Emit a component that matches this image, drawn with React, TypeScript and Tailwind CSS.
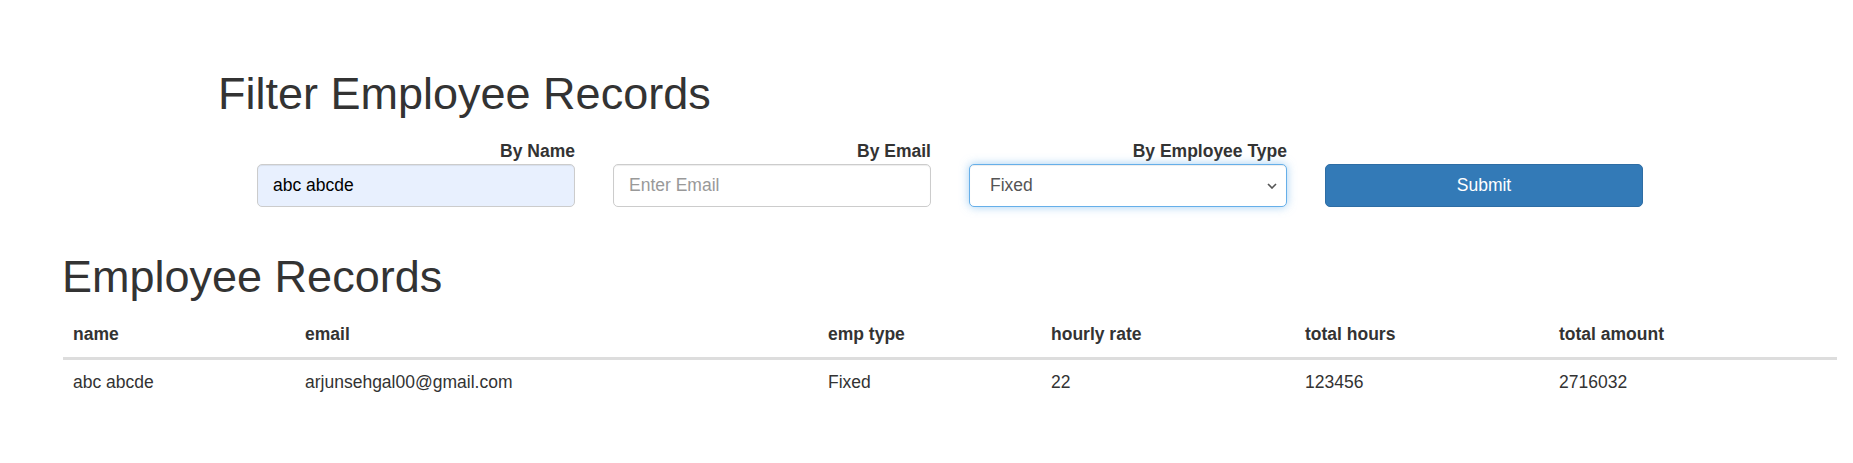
import { useState } from "react";

type Employee = {
  name: string;
  email: string;
  empType: string;
  hourlyRate: number;
  totalHours: number;
  totalAmount: number;
};

const columns: { key: keyof Employee; header: string; width: string }[] = [
  { key: "name", header: "name", width: "w-[232px]" },
  { key: "email", header: "email", width: "w-[523px]" },
  { key: "empType", header: "emp type", width: "w-[223px]" },
  { key: "hourlyRate", header: "hourly rate", width: "w-[254px]" },
  { key: "totalHours", header: "total hours", width: "w-[254px]" },
  { key: "totalAmount", header: "total amount", width: "w-[288px]" },
];

const records: Employee[] = [
  {
    name: "abc abcde",
    email: "arjunsehgal00@gmail.com",
    empType: "Fixed",
    hourlyRate: 22,
    totalHours: 123456,
    totalAmount: 2716032,
  },
];

const inputBase =
  "h-[43px] w-full rounded-[5px] border border-[#ccc] px-[15px] text-[17.5px] outline-none shadow-[inset_0_1px_1px_rgba(0,0,0,0.075)]";

const App = () => {
  const [name, setName] = useState("abc abcde");
  const [email, setEmail] = useState("");
  const [empType, setEmpType] = useState("Fixed");

  return (
    <div className="min-h-[463px] bg-white font-['Liberation_Sans',Arial,sans-serif] text-[17.5px] text-[#333]">
      {/* Filter */}
      <div className="pt-[69px] pl-[218px]">
        <h1 className="text-[45px] leading-[49.5px] font-normal">
          Filter Employee Records
        </h1>
      </div>
      <form
        className="mt-[20px] flex gap-[38px] pl-[257px]"
        onSubmit={(e) => e.preventDefault()}
      >
        <div className="flex w-[318px] flex-col">
          <label className="text-right font-bold leading-[25px]">By Name</label>
          <input
            className={`${inputBase} bg-[#e8f0fe] text-black`}
            value={name}
            onChange={(e) => setName(e.target.value)}
          />
        </div>
        <div className="flex w-[318px] flex-col">
          <label className="text-right font-bold leading-[25px]">By Email</label>
          <input
            className={`${inputBase} bg-white text-[#555] placeholder:text-[#999]`}
            placeholder="Enter Email"
            value={email}
            onChange={(e) => setEmail(e.target.value)}
          />
        </div>
        <div className="flex w-[318px] flex-col">
          <label className="text-right font-bold leading-[25px]">
            By Employee Type
          </label>
          <div className="relative">
            <select
              className="h-[43px] w-full appearance-none rounded-[5px] border border-[#66afe9] bg-white pl-[20px] text-[17.5px] text-[#555] outline-none shadow-[inset_0_1px_1px_rgba(0,0,0,0.075),0_0_10px_rgba(102,175,233,0.6)]"
              value={empType}
              onChange={(e) => setEmpType(e.target.value)}
            >
              <option>Fixed</option>
              <option>Hourly</option>
            </select>
            <svg
              className="pointer-events-none absolute right-[10px] top-[19px]"
              width="10"
              height="6"
              viewBox="0 0 10 6"
            >
              <path d="M1 1l4 4 4-4" fill="none" stroke="#555" strokeWidth="1.6" />
            </svg>
          </div>
        </div>
        <div className="flex w-[318px] flex-col">
          <div className="h-[25px]" />
          <button
            type="submit"
            className="h-[43px] w-full rounded-[5px] border border-[#2e6da4] bg-[#337ab7] text-[17.5px] text-white"
          >
            Submit
          </button>
        </div>
      </form>

      {/* Records */}
      <h1 className="mt-[45px] pl-[62px] text-[45px] leading-[49.5px] font-normal">
        Employee Records
      </h1>
      <table className="mt-[11px] ml-[63px] w-[1774px] table-fixed border-collapse">
        <thead>
          <tr>
            {columns.map((c) => (
              <th
                key={c.key}
                className={`${c.width} border-b-[3px] border-[#ddd] p-[10px] text-left font-bold leading-[25px]`}
              >
                {c.header}
              </th>
            ))}
          </tr>
        </thead>
        <tbody>
          {records.map((r) => (
            <tr key={r.email}>
              {columns.map((c) => (
                <td key={c.key} className="p-[10px] leading-[25px]">
                  {r[c.key]}
                </td>
              ))}
            </tr>
          ))}
        </tbody>
      </table>
    </div>
  );
};

export default App;
